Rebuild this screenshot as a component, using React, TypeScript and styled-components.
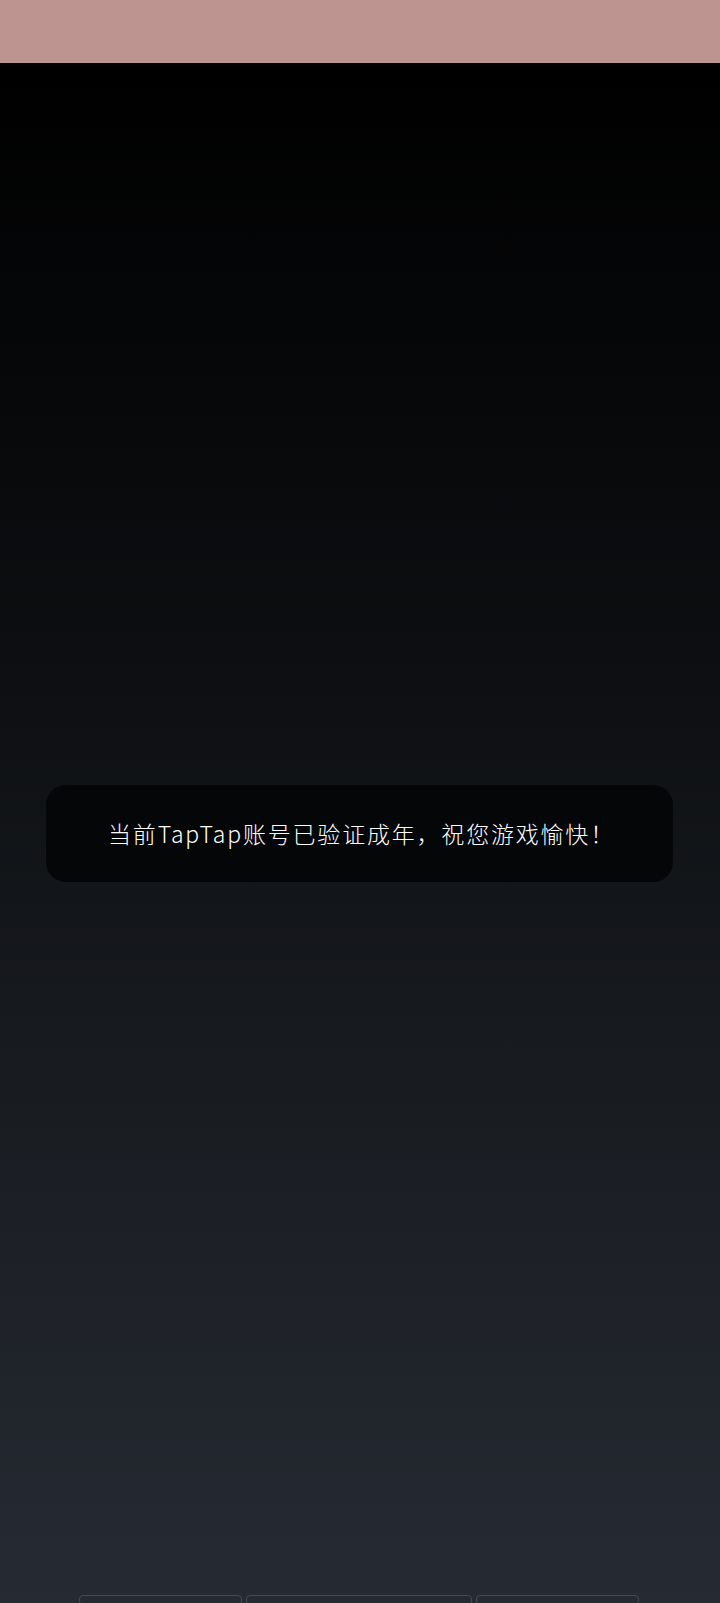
import styled, { createGlobalStyle } from "styled-components";

const GlobalStyle = createGlobalStyle`
  html, body {
    margin: 0;
    padding: 0;
    background: #000;
  }
  * {
    box-sizing: border-box;
  }
`;

const Page = styled.div`
  width: 720px;
  height: 1603px;
  display: flex;
  flex-direction: column;
  overflow: hidden;
  position: relative;
  font-family: "Noto Sans CJK SC", "Noto Sans", sans-serif;
`;

const StatusBar = styled.div`
  height: 63px;
  flex-shrink: 0;
  background: #bd948f;
`;

const Stage = styled.main`
  flex: 1;
  display: flex;
  align-items: center;
  justify-content: center;
  padding: 0 47px 0 46px;
  background: linear-gradient(180deg, #000000 0%, #0d0f12 40%, #1a1d22 70%, #262a33 100%);
`;

const Toast = styled.div`
  width: 100%;
  height: 97px;
  border-radius: 20px;
  background: #050608;
  display: flex;
  align-items: center;
  justify-content: center;
`;

const Message = styled.p`
  margin: 0 0 0 4px;
  color: #ffffff;
  font-size: 23px;
  font-weight: 300;
  letter-spacing: 1.8px;
  line-height: 1;
`;

const Dock = styled.div`
  position: absolute;
  left: 79px;
  right: 80px;
  bottom: -2px;
  display: flex;
  gap: 4px;
`;

const DockSlot = styled.div<{ $width: number }>`
  width: ${(p) => p.$width}px;
  height: 10px;
  border: 1px solid #454a53;
  border-radius: 4px;
`;

const App = () => {
  return (
    <Page>
      <GlobalStyle />
      <StatusBar />
      <Stage>
        <Toast>
          <Message>当前TapTap账号已验证成年，祝您游戏愉快！</Message>
        </Toast>
      </Stage>
      <Dock>
        <DockSlot $width={163} />
        <DockSlot $width={226} />
        <DockSlot $width={163} />
      </Dock>
    </Page>
  );
};

export default App;
